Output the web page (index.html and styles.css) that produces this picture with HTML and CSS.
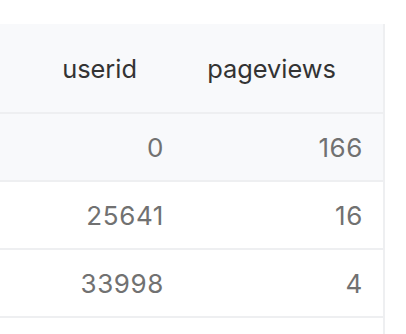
FILE: index.html
```html
<!DOCTYPE html>
<html>
<head>
<meta charset="utf-8">
<link rel="stylesheet" href="styles.css">
</head>
<body>
<div class="table">
  <div class="row head">
    <div class="cell c1">userid</div>
    <div class="cell c2">pageviews</div>
  </div>
  <div class="row hover">
    <div class="cell c1">0</div>
    <div class="cell c2">166</div>
  </div>
  <div class="row">
    <div class="cell c1">25641</div>
    <div class="cell c2">16</div>
  </div>
  <div class="row">
    <div class="cell c1">33998</div>
    <div class="cell c2">4</div>
  </div>
  <div class="row">
    <div class="cell c1"></div>
    <div class="cell c2"></div>
  </div>
</div>
</body>
</html>
```
FILE: styles.css
```css
html, body {
  margin: 0;
  padding: 0;
  background: #ffffff;
  overflow: hidden;
}
body {
  font-family: Inter, "Liberation Sans", sans-serif;
}
.table {
  margin-top: 24px;
  width: 383px;
  border-right: 2px solid #eeeff1;
}
.row {
  display: grid;
  grid-template-columns: 184px 199px;
  height: 66px;
  border-bottom: 2px solid #eeeff1;
}
.row.head {
  height: 88px;
  background: #f8f9fb;
}
.row.hover {
  background: #f8f9fb;
}
.cell {
  display: flex;
  align-items: center;
  justify-content: flex-end;
  padding-right: 20px;
  font-size: 26px;
  letter-spacing: 0.6px;
  color: #717171;
}
.head .cell {
  padding-right: 47px;
  font-size: 25.4px;
  letter-spacing: 0;
  color: #333333;
}
```
